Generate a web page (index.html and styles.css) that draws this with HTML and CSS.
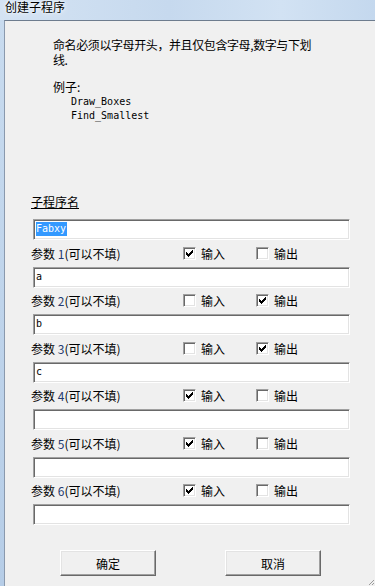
FILE: index.html
```html
<!DOCTYPE html>
<html lang="zh-CN">
<head>
    <meta charset="UTF-8">
    <meta name="viewport" content="width=device-width, initial-scale=1.0">
    <title>创建子程序</title>
    <link rel="stylesheet" href="styles.css">
</head>
<body>
    <div class="titlebar">创建子程序</div>

    <div class="frame">
        <div class="frame-edge"></div>
        <div class="client">
            <p class="hint">命名必须以字母开头，并且仅包含字母,数字与下划<br>线.</p>
            <p class="example-title">例子:</p>
            <pre class="examples">Draw_Boxes
Find_Smallest</pre>

            <div class="name-label">子程序名</div>
            <div class="field"><span class="selected">Fabxy</span></div>

            <div class="param-row">
                <span class="param-label">参数 <span class="num">1</span>(可以不填)</span>
                <span class="check"><span class="box on"></span>输入</span>
                <span class="check"><span class="box"></span>输出</span>
            </div>
            <div class="field">a</div>

            <div class="param-row">
                <span class="param-label">参数 <span class="num">2</span>(可以不填)</span>
                <span class="check"><span class="box"></span>输入</span>
                <span class="check"><span class="box on"></span>输出</span>
            </div>
            <div class="field">b</div>

            <div class="param-row">
                <span class="param-label">参数 <span class="num">3</span>(可以不填)</span>
                <span class="check"><span class="box"></span>输入</span>
                <span class="check"><span class="box on"></span>输出</span>
            </div>
            <div class="field">c</div>

            <div class="param-row">
                <span class="param-label">参数 <span class="num">4</span>(可以不填)</span>
                <span class="check"><span class="box on"></span>输入</span>
                <span class="check"><span class="box"></span>输出</span>
            </div>
            <div class="field"></div>

            <div class="param-row">
                <span class="param-label">参数 <span class="num">5</span>(可以不填)</span>
                <span class="check"><span class="box on"></span>输入</span>
                <span class="check"><span class="box"></span>输出</span>
            </div>
            <div class="field"></div>

            <div class="param-row">
                <span class="param-label">参数 <span class="num">6</span>(可以不填)</span>
                <span class="check"><span class="box on"></span>输入</span>
                <span class="check"><span class="box"></span>输出</span>
            </div>
            <div class="field"></div>

            <div class="buttons">
                <button class="btn">确定</button>
                <button class="btn">取消</button>
            </div>

            <svg class="grip" width="8" height="8" viewBox="0 0 8 8">
                <path d="M7 2L2 7M7 5L5 7" stroke="#9a9a9a" stroke-width="1"/>
            </svg>
        </div>
    </div>
</body>
</html>
```

FILE: styles.css
```css
body {
    margin: 0;
    padding: 0;
    background: #f0f0f0;
    font-family: "Noto Sans CJK SC", "Liberation Sans", sans-serif;
    font-size: 12px;
    color: #000;
    overflow: hidden;
}
.titlebar {
    height: 20px;
    padding-left: 5px;
    line-height: 14px;
    background: linear-gradient(to right, #d4e3f3, #c6d9ee 45%, #d2e2f3 75%, #c4d8ee);
    text-shadow: 0 0 6px #fff, 0 0 3px #fff;
}
.frame {
    display: flex;
    min-height: 566px;
}
.frame-edge {
    width: 4px;
    background: linear-gradient(to bottom, #c8dbef, #b6cde7);
}
.client {
    position: relative;
    flex: 1;
    background: #f0f0f0;
    border-left: 1px solid #8a99ad;
    border-top: 1px solid #6d7c8e;
    padding-top: 16px;
}
.hint {
    margin: 0 0 13px 48px;
    line-height: 15px;
    letter-spacing: -0.4px;
}
.example-title {
    margin: 0 0 1px 48px;
    line-height: 14px;
}
.examples {
    margin: 0 0 0 66px;
    font-family: "DejaVu Sans Mono", "Liberation Mono", monospace;
    font-size: 10px;
    line-height: 14px;
}
.name-label {
    margin: 72px 0 0 26px;
    line-height: 14px;
    text-decoration: underline;
}
.field {
    box-sizing: border-box;
    width: 317px;
    height: 21px;
    margin: 10px 0 0 28px;
    background: #fff;
    border: 1px solid;
    border-color: #a0a0a0 #fff #fff #a0a0a0;
    box-shadow: inset 1px 1px 0 #696969, inset -1px -1px 0 #e3e3e3;
    padding: 1px 0 0 2px;
    font-family: "DejaVu Sans Mono", "Liberation Mono", monospace;
    font-size: 10px;
    line-height: 16px;
}
.param-row + .field {
    margin-top: 0;
}
.selected {
    display: inline-block;
    background: #3399ff;
    color: #fff;
    line-height: 14px;
    padding-right: 1px;
}
.param-row {
    display: grid;
    grid-template-columns: 152px 73px auto;
    align-items: center;
    height: 26.5px;
    padding-left: 26px;
}
.param-label .num {
    color: #243c70;
}
.check {
    display: flex;
    align-items: center;
    gap: 5px;
}
.box {
    box-sizing: border-box;
    width: 13px;
    height: 13px;
    background: #fff;
    border: 1px solid;
    border-color: #a0a0a0 #fff #fff #a0a0a0;
    box-shadow: inset 1px 1px 0 #696969, inset -1px -1px 0 #e3e3e3;
}
.box.on {
    background: #fff url("data:image/svg+xml,%3Csvg xmlns='http://www.w3.org/2000/svg' width='7' height='7' shape-rendering='crispEdges'%3E%3Cpath d='M0 2h1v3h-1zM1 3h1v3h-1zM2 4h1v3h-1zM3 3h1v3h-1zM4 2h1v3h-1zM5 1h1v3h-1zM6 0h1v3h-1z' fill='%23000'/%3E%3C/svg%3E") no-repeat 2px 2px;
}
.buttons {
    display: flex;
    gap: 69px;
    margin: 25px 0 0 55px;
}
.btn {
    box-sizing: border-box;
    width: 96px;
    height: 26px;
    padding: 0;
    background: #f0f0f0;
    border: 1px solid;
    border-color: #fff #696969 #696969 #fff;
    box-shadow: inset -1px -1px 0 #a0a0a0, inset 1px 1px 0 #e3e3e3;
    font-family: "Noto Sans CJK SC", "Liberation Sans", sans-serif;
    font-size: 12px;
    color: #000;
}
.grip {
    position: absolute;
    right: 0;
    top: 557px;
}
```
